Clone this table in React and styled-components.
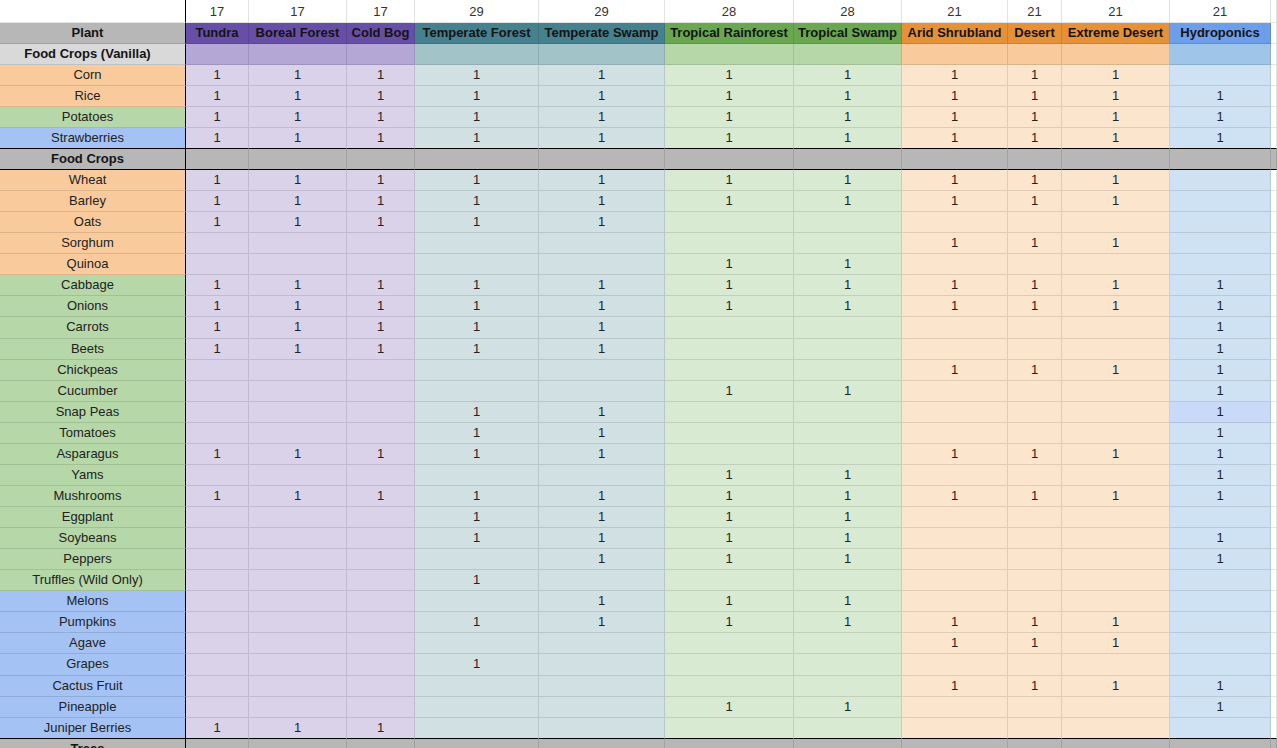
import React from "react";
import styled, { createGlobalStyle } from "styled-components";

// sheet look: google-sheets style grid of biomes x plants
const Global = createGlobalStyle`
  html, body { margin: 0; padding: 0; background: #fff; overflow: hidden; }
  body {
    font-family: "Liberation Sans", Arial, sans-serif;
    font-size: 13px;
    color: #222;
  }
`;

const COLS =
  "186px 63px 98px 68px 124px 126px 129px 108px 106px 54px 108px 101px 1fr";

const TONES = {
  p: { head: "#674ea7", sub: "#b4a7d6", body: "#d9d2e9" },
  t: { head: "#45818e", sub: "#a2c4c9", body: "#d0e0e3" },
  g: { head: "#6aa84f", sub: "#b6d7a8", body: "#d9ead3" },
  o: { head: "#e69138", sub: "#f9cb9c", body: "#fce5cd" },
  b: { head: "#6d9eeb", sub: "#9fc5e8", body: "#cfe2f3" },
};

const NAME_BG = { o: "#f9cb9c", g: "#b6d7a8", b: "#a4c2f4" };

const biomes = [
  { name: "Tundra", count: 17, zone: "p" },
  { name: "Boreal Forest", count: 17, zone: "p" },
  { name: "Cold Bog", count: 17, zone: "p" },
  { name: "Temperate Forest", count: 29, zone: "t" },
  { name: "Temperate Swamp", count: 29, zone: "t" },
  { name: "Tropical Rainforest", count: 28, zone: "g" },
  { name: "Tropical Swamp", count: 28, zone: "g" },
  { name: "Arid Shrubland", count: 21, zone: "o" },
  { name: "Desert", count: 21, zone: "o" },
  { name: "Extreme Desert", count: 21, zone: "o" },
  { name: "Hydroponics", count: 21, zone: "b" },
];

const vanilla = [
  ["Corn", "o", "11111111110"],
  ["Rice", "o", "11111111111"],
  ["Potatoes", "g", "11111111111"],
  ["Strawberries", "b", "11111111111"],
];

const crops = [
  ["Wheat", "o", "11111111110"],
  ["Barley", "o", "11111111110"],
  ["Oats", "o", "11111000000"],
  ["Sorghum", "o", "00000001110"],
  ["Quinoa", "o", "00000110000"],
  ["Cabbage", "g", "11111111111"],
  ["Onions", "g", "11111111111"],
  ["Carrots", "g", "11111000001"],
  ["Beets", "g", "11111000001"],
  ["Chickpeas", "g", "00000001111"],
  ["Cucumber", "g", "00000110001"],
  ["Snap Peas", "g", "00011000001"],
  ["Tomatoes", "g", "00011000001"],
  ["Asparagus", "g", "11111001111"],
  ["Yams", "g", "00000110001"],
  ["Mushrooms", "g", "11111111111"],
  ["Eggplant", "g", "00011110000"],
  ["Soybeans", "g", "00011110001"],
  ["Peppers", "g", "00001110001"],
  ["Truffles (Wild Only)", "g", "00010000000"],
  ["Melons", "b", "00001110000"],
  ["Pumpkins", "b", "00011111110"],
  ["Agave", "b", "00000001110"],
  ["Grapes", "b", "00010000000"],
  ["Cactus Fruit", "b", "00000001111"],
  ["Pineapple", "b", "00000110001"],
  ["Juniper Berries", "b", "11100000000"],
];

const Sheet = styled.div`
  width: 1277px;
  height: 748px;
  overflow: hidden;
`;

const Row = styled.div`
  display: grid;
  grid-template-columns: ${COLS};
  height: ${(p) => p.$h || 21}px;
`;

const Cell = styled.div`
  box-sizing: border-box;
  display: flex;
  align-items: center;
  justify-content: center;
  min-width: 0;
  overflow: hidden;
  white-space: nowrap;
  background: ${(p) => p.$bg || "#fff"};
  border-right: 1px solid
    ${(p) => (p.$edge ? "#000" : p.$line || "rgba(0,0,0,0.11)")};
  border-bottom: 1px solid
    ${(p) => (p.$rule ? "#000" : p.$line || "rgba(0,0,0,0.11)")};
  font-weight: ${(p) => (p.$bold ? 700 : 400)};
  color: ${(p) => (p.$bold ? "#141414" : "#222")};
  padding-bottom: 1px;
`;

// first column sits a little left of centre, like the sheet
const NameCell = styled(Cell)`
  padding-right: 10px;
`;

const CountCell = styled(Cell)`
  color: #333;
  padding-top: 2px;
`;

function DataRow({ name, tone, marks, h, rule, highlight }) {
  return (
    <Row $h={h}>
      <NameCell $bg={NAME_BG[tone]} $edge $rule={rule}>
        {name}
      </NameCell>
      {biomes.map((b, i) => (
        <Cell
          key={b.name}
          $rule={rule}
          $bg={highlight === i ? "#c9daf8" : TONES[b.zone].body}
        >
          {marks[i] === "1" ? "1" : ""}
        </Cell>
      ))}
      <Cell $rule={rule} $line={rule ? undefined : "#e2e2e2"} />
    </Row>
  );
}

function SectionRow({ title, bg, tone, h, rule }) {
  return (
    <Row $h={h}>
      <NameCell $bg={bg} $edge $bold $rule={rule}>
        {title}
      </NameCell>
      {biomes.map((b) => (
        <Cell key={b.name} $rule={rule} $bg={tone ? TONES[b.zone][tone] : bg} />
      ))}
      <Cell
        $rule={rule}
        $bg={tone ? "#fff" : bg}
        $line={tone ? "#e2e2e2" : undefined}
      />
    </Row>
  );
}

export default function App() {
  return (
    <Sheet>
      <Global />
      <Row $h={23}>
        <Cell $edge $line="#e2e2e2" />
        {biomes.map((b) => (
          <CountCell key={b.name} $line="#e2e2e2">
            {b.count}
          </CountCell>
        ))}
        <Cell $line="#e2e2e2" />
      </Row>
      <Row>
        <NameCell $bg="#b7b7b7" $edge $bold>
          Plant
        </NameCell>
        {biomes.map((b) => (
          <Cell key={b.name} $bg={TONES[b.zone].head} $bold>
            {b.name}
          </Cell>
        ))}
        <Cell $line="#e2e2e2" />
      </Row>
      <SectionRow title="Food Crops (Vanilla)" bg="#d9d9d9" tone="sub" />
      {vanilla.map(([name, tone, marks], i) => (
        <DataRow
          key={name}
          name={name}
          tone={tone}
          marks={marks}
          rule={i === vanilla.length - 1}
        />
      ))}
      <SectionRow title="Food Crops" bg="#b7b7b7" rule />
      {crops.map(([name, tone, marks], i) => (
        <DataRow
          key={name}
          name={name}
          tone={tone}
          marks={marks}
          h={21.07}
          rule={i === crops.length - 1}
          highlight={name === "Snap Peas" ? 10 : undefined}
        />
      ))}
      <SectionRow title="Trees" bg="#b7b7b7" />
    </Sheet>
  );
}
